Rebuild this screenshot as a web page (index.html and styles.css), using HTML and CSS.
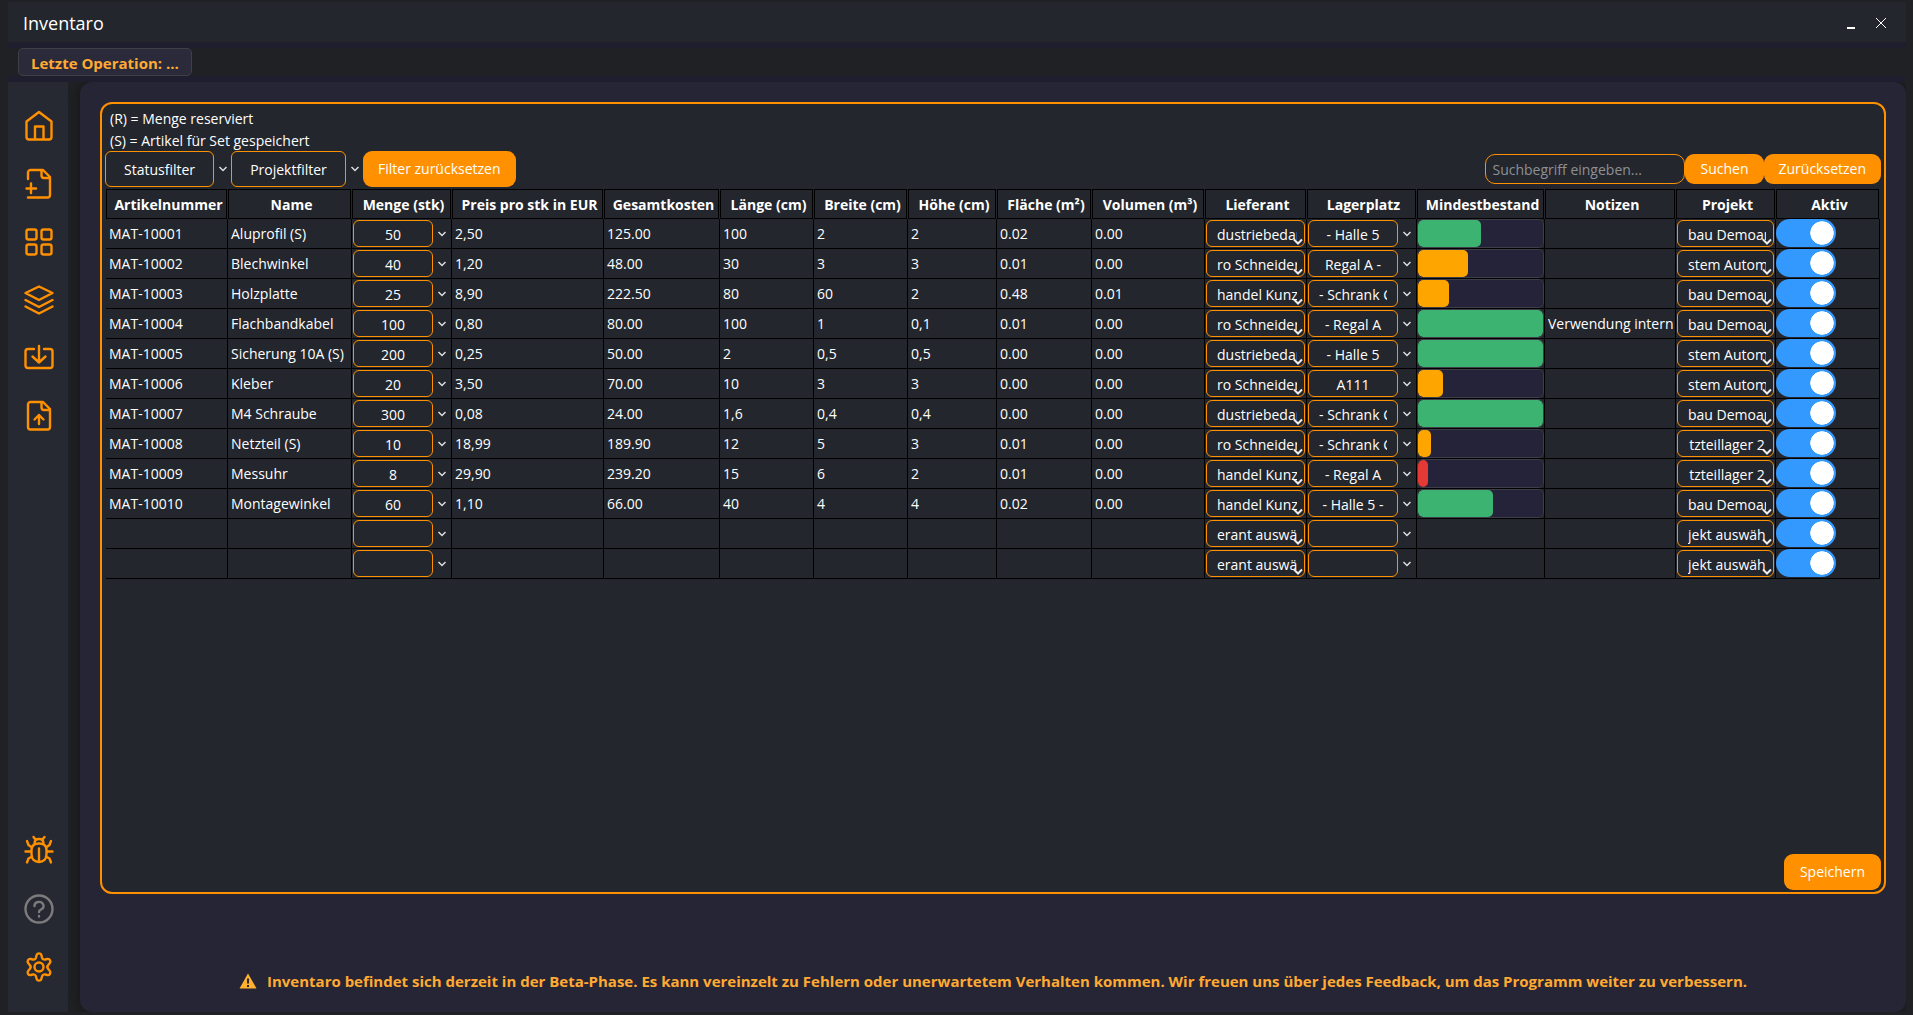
FILE: index.html
```html
<!DOCTYPE html>
<html lang="de">
<head>
<meta charset="utf-8">
<meta name="viewport" content="width=device-width, initial-scale=1">
<title>Inventaro</title>
<link rel="stylesheet" href="styles.css">
</head>
<body>
<div class="window">
  <header class="titlebar">
    <h1 class="title">Inventaro</h1>
    <div class="window-buttons">
      <button class="window-button" type="button" aria-label="Minimieren"><svg width="16" height="16" viewBox="0 0 16 16"><path d="M4 13h8" stroke-width="2"/></svg></button>
      <button class="window-button" type="button" aria-label="Schließen"><svg width="16" height="16" viewBox="0 0 16 16"><path d="M3 3l10 10M13 3L3 13"/></svg></button>
    </div>
  </header>

  <div class="statusbar"><span class="status">Letzte Operation: ...</span></div>

  <div class="workspace">
    <nav class="sidebar">
      <button class="nav-button" type="button" aria-label="Start"><svg viewBox="0 0 36 36"><path d="M5.500 13.500 18 4l12.500 9.500V29a2.500 2.500 0 0 1-2.500 2.500H8A2.500 2.500 0 0 1 5.500 29zM14 31V18.500h8.500V31"/></svg></button>
      <button class="nav-button" type="button" aria-label="Artikel anlegen"><svg viewBox="0 0 36 36"><path d="M7 13V6.500A2.500 2.500 0 0 1 9.500 4H22l7 7v18a2.500 2.500 0 0 1-2.500 2.500H7M20.500 4v5.500A2.500 2.500 0 0 0 23 12h6M10 17.500v9.500M5.500 22.500h9.500"/></svg></button>
      <button class="nav-button" type="button" aria-label="Übersicht"><svg viewBox="0 0 36 36"><rect x="5.500" y="5.500" width="10" height="10" rx="2"/><rect x="20.500" y="5.500" width="10" height="10" rx="2"/><rect x="5.500" y="20.500" width="10" height="10" rx="2"/><rect x="20.500" y="20.500" width="10" height="10" rx="2"/></svg></button>
      <button class="nav-button" type="button" aria-label="Sets"><svg viewBox="0 0 36 36"><path d="M4.500 11 18 4.500 31.500 11 18 18zM4.500 18 18 25l13.500-7M4.500 24.500 18 31.500l13.500-7"/></svg></button>
      <button class="nav-button" type="button" aria-label="Importieren"><svg viewBox="0 0 36 36"><path d="M13 9H7a2.500 2.500 0 0 0-2.500 2.500v14A2.500 2.500 0 0 0 7 28h22a2.500 2.500 0 0 0 2.500-2.500v-14A2.500 2.500 0 0 0 29 9h-6M18 6v16.500M11.500 16.500l6.500 6 6.500-6"/></svg></button>
      <button class="nav-button" type="button" aria-label="Exportieren"><svg viewBox="0 0 36 36"><path d="M9.500 4H22l7 7v18a2.500 2.500 0 0 1-2.500 2.500h-17A2.500 2.500 0 0 1 7 29V6.500A2.500 2.500 0 0 1 9.500 4zM20.500 4v5.500A2.500 2.500 0 0 0 23 12h6M18 26v-9M13.500 21.500l4.500-4.500 4.500 4.500"/></svg></button>
      <button class="nav-button nav-button--low" type="button" aria-label="Fehler melden"><svg viewBox="0 0 36 36"><path d="M10.500 17c0-4 2.500-6.500 7.500-6.500s7.500 2.500 7.500 6.500v4c0 5-3 8-7.500 8s-7.500-3-7.500-8zM18 15.500v13.500M13.500 10.500c0-3 1.500-4.500 4.500-4.500s4.500 1.500 4.500 4.500M14.500 6.500 12.500 4M21.500 6.500 23.500 4M10.500 18.500H4.500M31.500 18.500h-6M11 14.500l-3.500-2.500L6 8M25 14.500l3.500-2.500L30 8M11 23.500l-3.500 2L6 29.500M25 23.500l3.500 2L30 29.500"/></svg></button>
      <button class="nav-button nav-button--muted" type="button" aria-label="Hilfe"><svg viewBox="0 0 36 36"><circle cx="18" cy="18" r="13.500"/><path d="M13.500 15a4.500 4 0 1 1 6.500 3.500c-1.500.8-2 1.500-2 2.500M18 25v.5"/></svg></button>
      <button class="nav-button" type="button" aria-label="Einstellungen"><svg viewBox="0 0 36 36"><circle cx="18" cy="18" r="4.500"/><path d="M15.600 6.200c.6-2.400 4.200-2.400 4.800 0l.7 2.600c.4 1.300 1.800 2 3.100 1.700l2-.5c2.400-.6 4.200 2.400 2.500 4.200l-1.500 1.900c-1 1-1 2.700 0 3.800l1.500 1.900c1.700 1.800-.1 4.800-2.500 4.200l-2-.5c-1.300-.3-2.700.5-3.100 1.700l-.7 2.600c-.6 2.400-4.200 2.400-4.800 0l-.7-2.600c-.4-1.200-1.800-2-3.100-1.700l-2 .5c-2.400.6-4.200-2.400-2.500-4.200l1.500-1.900c1-1.100 1-2.800 0-3.800l-1.500-1.900c-1.700-1.800.1-4.800 2.500-4.200l2 .5c1.300.3 2.700-.4 3.100-1.700z"/></svg></button>
    </nav>

    <main class="panel">
      <section class="inventory">
        <p class="legend">(R) = Menge reserviert</p>
        <p class="legend">(S) = Artikel für Set gespeichert</p>
        <div class="toolbar">
          <span class="combo combo--status"><select class="select" aria-label="Statusfilter"><option>Statusfilter</option></select></span>
          <span class="combo combo--project"><select class="select" aria-label="Projektfilter"><option>Projektfilter</option></select></span>
          <button class="button button--tall" type="button">Filter zurücksetzen</button>
          <form class="search">
            <input class="search-input" type="text" placeholder="Suchbegriff eingeben..." aria-label="Suchbegriff">
            <button class="button" type="button">Suchen</button>
            <button class="button" type="reset">Zurücksetzen</button>
          </form>
        </div>
        <table class="table">
          <colgroup>
            <col class="col-number"><col class="col-name"><col class="col-amount"><col class="col-price"><col class="col-total"><col class="col-length"><col class="col-width"><col class="col-height"><col class="col-area"><col class="col-volume"><col class="col-supplier"><col class="col-place"><col class="col-stock"><col class="col-notes"><col class="col-project"><col class="col-active">
          </colgroup>
          <thead>
            <tr>
              <th><span>Artikelnummer</span></th><th><span>Name</span></th><th><span>Menge (stk)</span></th><th><span>Preis pro stk in EUR</span></th><th><span>Gesamtkosten</span></th><th><span>Länge (cm)</span></th><th><span>Breite (cm)</span></th><th><span>Höhe (cm)</span></th><th><span>Fläche (m²)</span></th><th><span>Volumen (m³)</span></th><th><span>Lieferant</span></th><th><span>Lagerplatz</span></th><th><span>Mindestbestand</span></th><th><span>Notizen</span></th><th><span>Projekt</span></th><th><span>Aktiv</span></th>
            </tr>
          </thead>
          <tbody id="rows"></tbody>
        </table>
        <button class="button button--tall button--save" type="button">Speichern</button>
      </section>
      <p class="notice"><svg width="18" height="16" viewBox="0 0 18 16" aria-hidden="true"><path d="M9 0.500 17.500 15.500H0.500z" fill="#ffb02e"/><path d="M9 5.500v5M9 12v2" stroke="#262535" stroke-width="2"/></svg>Inventaro befindet sich derzeit in der Beta-Phase. Es kann vereinzelt zu Fehlern oder unerwartetem Verhalten kommen. Wir freuen uns über jedes Feedback, um das Programm weiter zu verbessern.</p>
    </main>
  </div>
</div>
<script src="table.js"></script>
</body>
</html>
```
FILE: table.js
```js
// number, name, amount, price, total, length, width, height, area, volume,
// supplier, place, stock percentage, stock level, notes, project
const items = [
  ["MAT-10001", "Aluprofil (S)", "50", "2,50", "125.00", "100", "2", "2", "0.02", "0.00", "dustriebedarf", "- Halle 5", 50, "ok", "", "bau Demoanlage"],
  ["MAT-10002", "Blechwinkel", "40", "1,20", "48.00", "30", "3", "3", "0.01", "0.00", "ro Schneider", "Regal A -", 40, "low", "", "stem Automation"],
  ["MAT-10003", "Holzplatte", "25", "8,90", "222.50", "80", "60", "2", "0.48", "0.01", "handel Kunze", "- Schrank C", 25, "low", "", "bau Demoanlage"],
  ["MAT-10004", "Flachbandkabel", "100", "0,80", "80.00", "100", "1", "0,1", "0.01", "0.00", "ro Schneider", "- Regal A", 100, "ok", "Verwendung intern", "bau Demoanlage"],
  ["MAT-10005", "Sicherung 10A (S)", "200", "0,25", "50.00", "2", "0,5", "0,5", "0.00", "0.00", "dustriebedarf", "- Halle 5", 100, "ok", "", "stem Automation"],
  ["MAT-10006", "Kleber", "20", "3,50", "70.00", "10", "3", "3", "0.00", "0.00", "ro Schneider", "A111", 20, "low", "", "stem Automation"],
  ["MAT-10007", "M4 Schraube", "300", "0,08", "24.00", "1,6", "0,4", "0,4", "0.00", "0.00", "dustriebedarf", "- Schrank C", 100, "ok", "", "bau Demoanlage"],
  ["MAT-10008", "Netzteil (S)", "10", "18,99", "189.90", "12", "5", "3", "0.01", "0.00", "ro Schneider", "- Schrank C", 10, "low", "", "tzteillager 2"],
  ["MAT-10009", "Messuhr", "8", "29,90", "239.20", "15", "6", "2", "0.01", "0.00", "handel Kunze", "- Regal A", 8, "critical", "", "tzteillager 2"],
  ["MAT-10010", "Montagewinkel", "60", "1,10", "66.00", "40", "4", "4", "0.02", "0.00", "handel Kunze", "- Halle 5 -", 60, "ok", "", "bau Demoanlage"],
  ["", "", "", "", "", "", "", "", "", "", "erant auswählen", "", null, "", "", "jekt auswählen"],
  ["", "", "", "", "", "", "", "", "", "", "erant auswählen", "", null, "", "", "jekt auswählen"],
];

const select = (label, value, cls) =>
  `<select class="select ${cls}" aria-label="${label}"><option>${value}</option></select>`;
const combo = (label, value) =>
  `<span class="combo">${select(label, value, "")}</span>`;

document.getElementById("rows").innerHTML = items.map((item) => {
  const text = (from, to) => item.slice(from, to).map((v) => `<td>${v}</td>`).join("");
  const stock = item[12] === null ? "" :
    `<progress class="stock stock--${item[13]}" max="100" value="${item[12]}" aria-label="Mindestbestand"></progress>`;
  return `<tr>${text(0, 2)}
    <td class="control">${combo("Menge", item[2])}</td>
    ${text(3, 10)}
    <td class="control">${select("Lieferant", item[10], "select--inner")}</td>
    <td class="control">${combo("Lagerplatz", item[11])}</td>
    <td class="control control--flush">${stock}</td>
    ${text(14, 15)}
    <td class="control">${select("Projekt", item[15], "select--inner")}</td>
    <td class="control control--flush"><input class="toggle" type="checkbox" checked aria-label="Aktiv"></td></tr>`;
}).join("");
```
FILE: styles.css
```css
* {
  box-sizing: border-box;
}

body {
  margin: 0;
  background: #202124;
  color: #fff;
  font: 14px/22px "Open Sans", "Noto Sans", sans-serif;
}

button,
input,
select {
  margin: 0;
  font: inherit;
  color: inherit;
}

.window {
  display: flex;
  flex-direction: column;
  gap: 6px;
  min-height: 100vh;
  padding: 2px 7px 3px 8px;
  background: #1f1e2e content-box;
}

.titlebar {
  display: flex;
  align-items: center;
  justify-content: space-between;
  height: 40px;
  padding: 2px 17px 0 15px;
  background: #23262d;
}

.title {
  margin: 0;
  font-size: 18px;
  font-weight: 400;
}

.window-buttons {
  display: flex;
  gap: 14px;
}

.window-button {
  display: flex;
  padding: 0;
  border: 0;
  background: none;
}

.window-button svg {
  stroke: #fff;
}

.statusbar {
  display: flex;
  height: 28px;
  padding-left: 10px;
  background: #202124;
}

.status {
  padding: 3px 12px 0;
  border: 1px solid #3f3f46;
  border-radius: 5px;
  background: #2b2a3a;
  color: #ffaa33;
  font-size: 15px;
  font-weight: 700;
}

.workspace {
  display: flex;
  flex: 1;
  gap: 12px;
  background: #202124;
}

.sidebar {
  display: flex;
  flex-direction: column;
  width: 60px;
  padding: 15px 0 16px 2px;
  background: #262832;
}

.nav-button {
  display: flex;
  align-items: center;
  justify-content: center;
  height: 58px;
  padding: 0;
  border: 0;
  background: none;
}

.nav-button svg {
  width: 36px;
  height: 36px;
  fill: none;
  stroke: #ff9100;
  stroke-width: 2.4;
  stroke-linecap: round;
  stroke-linejoin: round;
}

.nav-button--low {
  margin-top: auto;
}

.nav-button--muted svg {
  stroke: #7c7c7c;
}

.panel {
  display: flex;
  flex: 1;
  flex-direction: column;
  min-width: 0;
  padding: 20px 20px 19px;
  border-radius: 12px;
  background: #262535;
  box-shadow: 0 0 12px #141416;
  clip-path: inset(0 0 0 -12px);
}

.inventory {
  display: flex;
  flex: 1;
  flex-direction: column;
  padding: 4px 4px 2px;
  border: 2px solid #ff9100;
  border-radius: 12px;
  background: #23262d;
}

.legend {
  margin: 0;
  padding-left: 4px;
}

.toolbar {
  display: flex;
  align-items: center;
  height: 36px;
  margin: -1px -1px 2px;
}

.search {
  display: flex;
  margin-left: auto;
}

.search-input {
  width: 200px;
  height: 30px;
  padding: 0 6px;
  border: 1px solid #ff9100;
  border-radius: 10px;
  background: none;
}

.search-input::placeholder {
  color: #8e9094;
}

.button {
  height: 30px;
  padding: 0 15px;
  border: 0;
  border-radius: 9px;
  background: #ff9100;
}

.button--tall {
  height: 36px;
}

.button--save {
  align-self: flex-end;
  margin: auto -1px 0 0;
  padding: 0 16px;
}

.combo {
  display: flex;
  padding-right: 17px;
  background: url("data:image/svg+xml,%3Csvg xmlns='http://www.w3.org/2000/svg' width='10' height='8' viewBox='0 0 10 8'%3E%3Cpath d='M1.500 2 5 5.500 8.500 2' fill='none' stroke='%23ddd' stroke-width='1.500'/%3E%3C/svg%3E") no-repeat right 3px center;
}

.combo--status {
  width: 126px;
  height: 36px;
}

.combo--project {
  width: 132px;
  height: 36px;
}

.select {
  width: 100%;
  height: 100%;
  padding: 2px 10px 0;
  border: 1px solid #ff9100;
  border-radius: 6px;
  appearance: none;
  background: none;
  text-align: center;
}

.select--inner {
  padding: 2px 7px 0 10px;
  background: url("data:image/svg+xml,%3Csvg xmlns='http://www.w3.org/2000/svg' width='12' height='8' viewBox='0 0 12 8'%3E%3Cpath d='M2 1.500 6 5.500 10 1.500' fill='none' stroke='%23eee' stroke-width='2'/%3E%3C/svg%3E") no-repeat right 0 bottom 0;
}

.table {
  width: 100%;
  table-layout: fixed;
  border-spacing: 0;
}

.col-number { width: 122px; }
.col-name { width: 124px; }
.col-amount { width: 100px; }
.col-price { width: 152px; }
.col-total { width: 116px; }
.col-length { width: 94px; }
.col-width { width: 94px; }
.col-height { width: 89px; }
.col-area { width: 95px; }
.col-volume { width: 113px; }
.col-supplier { width: 102px; }
.col-place { width: 110px; }
.col-stock { width: 128px; }
.col-notes { width: 131px; }
.col-project { width: 100px; }
.col-active { width: 104px; }

.table th {
  padding: 0 1px 0 0;
}

.table th span {
  display: block;
  height: 30px;
  padding-left: 4px;
  border: 1px solid #000;
  line-height: 30px;
  white-space: nowrap;
}

.table td {
  height: 30px;
  padding: 0 0 0 3px;
  border: solid #000;
  border-width: 0 1px 1px 0;
  white-space: nowrap;
}

.table .control {
  padding: 1px;
}

.control .combo,
.control > .select {
  height: 27px;
}

.table .control--flush {
  padding: 0;
  vertical-align: top;
}

.stock {
  display: block;
  width: 100%;
  height: 29px;
  border: 1px solid #3e3e48;
  border-radius: 6px;
  appearance: none;
  background: #25233a;
  overflow: hidden;
}

.stock::-webkit-progress-bar {
  background: #25233a;
}

.stock::-webkit-progress-value {
  border-radius: 5px;
}

.stock--ok::-webkit-progress-value { background: #3cb371; }
.stock--low::-webkit-progress-value { background: #ffa500; }
.stock--critical::-webkit-progress-value { background: #e53935; }

.toggle {
  display: block;
  width: 60px;
  height: 28px;
  border-radius: 14px;
  appearance: none;
  background: radial-gradient(circle closest-side, #fff 95%, transparent) no-repeat right 2px center / 24px 24px #3399ff;
}

.toggle:not(:checked) {
  background-color: #555;
  background-position: left 2px center;
}

.notice {
  display: flex;
  align-items: center;
  justify-content: center;
  gap: 10px;
  margin: 75px 0 0;
  color: #ffaa33;
  font-size: 15px;
  font-weight: 700;
  line-height: 24px;
}
```
